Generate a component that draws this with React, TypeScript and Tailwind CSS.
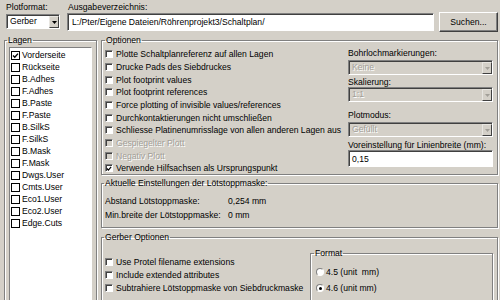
import React from 'react';

const LAYERS = [
  'Vorderseite', 'Rückseite', 'B.Adhes', 'F.Adhes', 'B.Paste', 'F.Paste', 'B.SilkS', 'F.SilkS',
  'B.Mask', 'F.Mask', 'Dwgs.User', 'Cmts.User', 'Eco1.User', 'Eco2.User', 'Edge.Cuts',
];

const OPTIONS: { label: string; checked?: boolean; disabled?: boolean }[] = [
  { label: 'Plotte Schaltplanreferenz auf allen Lagen' },
  { label: 'Drucke Pads des Siebdruckes' },
  { label: 'Plot footprint values' },
  { label: 'Plot footprint references' },
  { label: 'Force plotting of invisible values/references' },
  { label: 'Durchkontaktierungen nicht umschließen' },
  { label: 'Schliesse Platinenumrisslage von allen anderen Lagen aus' },
  { label: 'Gespiegelter Plott', disabled: true },
  { label: 'Negativ Plott', disabled: true },
  { label: 'Verwende Hilfsachsen als Ursprungspunkt', checked: true },
];

const GERBER_OPTIONS = [
  'Use Protel filename extensions',
  'Include extended attributes',
  'Subtrahiere Lötstoppmaske von Siebdruckmaske',
];

const disabledText = 'text-[#a29f98] [text-shadow:1px_1px_0_#fff]';

const Tick = () => (
  <svg width="7" height="7" viewBox="0 0 7 7" className="block">
    <path d="M1 3.5 L2.8 5.3 L6 1.6" fill="none" stroke="#000" strokeWidth="1.4" />
  </svg>
);

const Arrow = ({ disabled }: { disabled?: boolean }) => (
  <svg width="5" height="3" viewBox="0 0 5 3" className="block">
    <path d="M0 0 H5 L2.5 3 Z" fill={disabled ? '#a29f98' : '#000'} />
  </svg>
);

// 3D-Checkbox wie in den Optionen
const CheckBox = ({ checked, disabled }: { checked?: boolean; disabled?: boolean }) => (
  <span
    className={`w-[8px] h-[8px] shrink-0 flex items-center justify-center border border-t-[#808080] border-l-[#808080] border-b-white border-r-white shadow-[inset_1px_1px_0_#404040] ${
      disabled ? 'bg-[#d4d0c8]' : 'bg-white'
    }`}
  >
    {checked && <Tick />}
  </span>
);

const Radio = ({ checked }: { checked?: boolean }) => (
  <span className="w-[8px] h-[8px] shrink-0 rounded-full bg-white flex items-center justify-center border border-t-[#808080] border-l-[#808080] border-b-white border-r-white">
    {checked && <span className="w-[3px] h-[3px] rounded-full bg-black" />}
  </span>
);

const Combo = ({ value, disabled }: { value: string; disabled?: boolean }) => (
  <div
    className={`flex h-[15px] border border-t-[#808080] border-l-[#808080] border-b-white border-r-white shadow-[inset_1px_1px_0_#404040] ${
      disabled ? `bg-[#d4d0c8] ${disabledText}` : 'bg-white'
    }`}
  >
    <span className="flex-1 pl-[3px] pt-[1px] leading-[11px]">{value}</span>
    <span className="w-[10px] mt-[1px] flex items-center justify-center bg-[#d4d0c8] border border-t-[#e8e6e1] border-l-[#e8e6e1] border-b-[#404040] border-r-[#404040]">
      <Arrow disabled={disabled} />
    </span>
  </div>
);

const Legend = ({ children, className = '' }: { children: React.ReactNode; className?: string }) => (
  <legend className={`px-[1px] leading-[10px] ${className}`}>{children}</legend>
);

const groupCls = 'border border-[#808080] shadow-[inset_1px_1px_0_#fff,1px_1px_0_#fff] min-w-0';

export default function App() {
  return (
    <div className="w-[500px] h-[300px] overflow-hidden bg-[#d4d0c8] text-black font-['Liberation_Sans',Arial,sans-serif] text-[8.6px] leading-[10px] flex flex-col">
      {/* Kopfzeile */}
      <div className="h-[35px] flex items-start shrink-0">
        <div className="ml-[6px] w-[54px] pt-[2px]">
          <div className="h-[10px]">Plotformat:</div>
          <div className="mt-[2px]">
            <Combo value="Gerber" />
          </div>
        </div>
        <div className="ml-[7px] w-[367px] pt-[2px]">
          <div className="h-[10px] pl-[1px]">Ausgabeverzeichnis:</div>
          <div className="mt-[1px] h-[18px] bg-white border border-t-[#808080] border-l-[#808080] border-b-white border-r-white shadow-[inset_1px_1px_0_#404040] pl-[4px] pt-[3px] whitespace-nowrap">
            L:/Pter/Eigene Dateien/Röhrenprojekt3/Schaltplan/
          </div>
        </div>
        <button className="ml-[5px] mt-[12px] w-[59px] h-[20px] bg-[#d4d0c8] border border-t-white border-l-white border-b-[#404040] border-r-[#404040] shadow-[inset_-1px_-1px_0_#808080] text-center">
          Suchen...
        </button>
      </div>

      <div className="flex flex-1 min-h-0">
        {/* Lagen */}
        <fieldset className={`${groupCls} ml-[4px] w-[93px] h-[300px]`}>
          <Legend className="ml-[2px]">Lagen</Legend>
          <div className="px-[4px] pt-[2px] h-full">
            <div className="h-full bg-white border border-t-[#808080] border-l-[#808080] border-b-white border-r-white pt-[1px]">
              {LAYERS.map((l, i) => (
                <div key={l} className="h-[12px] flex items-center gap-[2px] pl-[1px]">
                  <span className="w-[9px] h-[9px] shrink-0 border-[1.5px] border-black bg-white flex items-center justify-center">
                    {i === 0 && <Tick />}
                  </span>
                  <span className="whitespace-nowrap">{l}</span>
                </div>
              ))}
            </div>
          </div>
        </fieldset>

        <div className="ml-[4px] w-[397px] flex flex-col">
          {/* Optionen */}
          <fieldset className={`${groupCls} h-[140px] shrink-0`}>
            <Legend className="ml-[3px]">Optionen</Legend>
            <div className="flex">
              <div className="flex-1 pl-[3px] pt-[3px]">
                {OPTIONS.map(o => (
                  <div key={o.label} className="h-[12.67px] flex items-center gap-[3px] whitespace-nowrap">
                    <CheckBox checked={o.checked} disabled={o.disabled} />
                    <span className={o.disabled ? disabledText : ''}>{o.label}</span>
                  </div>
                ))}
              </div>
              <div className="w-[145px] mr-[4px] flex flex-col">
                <div className="mt-[3px] h-[10px]">Bohrlochmarkierungen:</div>
                <div className="mt-[2px]">
                  <Combo value="Keine" disabled />
                </div>
                <div className="mt-[2px] h-[10px]">Skalierung:</div>
                <div>
                  <Combo value="1:1" disabled />
                </div>
                <div className="mt-[8px] h-[10px]">Plotmodus:</div>
                <div className="mt-[2px]">
                  <Combo value="Gefüllt" disabled />
                </div>
                <div className="mt-[3px] h-[10px] whitespace-nowrap">Voreinstellung für Linienbreite (mm):</div>
                <div className="h-[17px] bg-white border border-t-[#808080] border-l-[#808080] border-b-white border-r-white shadow-[inset_1px_1px_0_#404040] pl-[3px] pt-[3px]">
                  0,15
                </div>
              </div>
            </div>
          </fieldset>

          {/* Lötstoppmaske */}
          <fieldset className={`${groupCls} mt-[3px] h-[50px] shrink-0`}>
            <Legend className="ml-[2px]">Aktuelle Einstellungen der Lötstoppmaske:</Legend>
            <div className="pl-[3px] pt-[8px] flex flex-col gap-[4px]">
              <div className="flex h-[10px]">
                <span className="w-[123px]">Abstand Lötstoppmaske:</span>
                <span>0,254 mm</span>
              </div>
              <div className="flex h-[10px]">
                <span className="w-[123px]">Min.breite der Lötstoppmaske:</span>
                <span>0 mm</span>
              </div>
            </div>
          </fieldset>

          {/* Gerber */}
          <fieldset className={`${groupCls} mt-[4px] h-[100px] shrink-0`}>
            <Legend className="ml-[2px]">Gerber Optionen</Legend>
            <div className="flex">
              <div className="flex-1 pl-[3px] pt-[13.5px]">
                {GERBER_OPTIONS.map(g => (
                  <div key={g} className="h-[13px] flex items-center gap-[3px] whitespace-nowrap">
                    <CheckBox />
                    <span>{g}</span>
                  </div>
                ))}
              </div>
              <fieldset className={`${groupCls} w-[183px] mr-[4px] mt-[6px] h-[80px]`}>
                <Legend className="ml-[3px]">Format</Legend>
                <div className="pl-[5px] pt-[9px] flex flex-col gap-[6px]">
                  <div className="h-[10px] flex items-center gap-[2px]">
                    <Radio />
                    <span>4.5 (unit&nbsp; mm)</span>
                  </div>
                  <div className="h-[10px] flex items-center gap-[2px]">
                    <Radio checked />
                    <span>4.6 (unit mm)</span>
                  </div>
                </div>
              </fieldset>
            </div>
          </fieldset>
        </div>
      </div>
    </div>
  );
}
